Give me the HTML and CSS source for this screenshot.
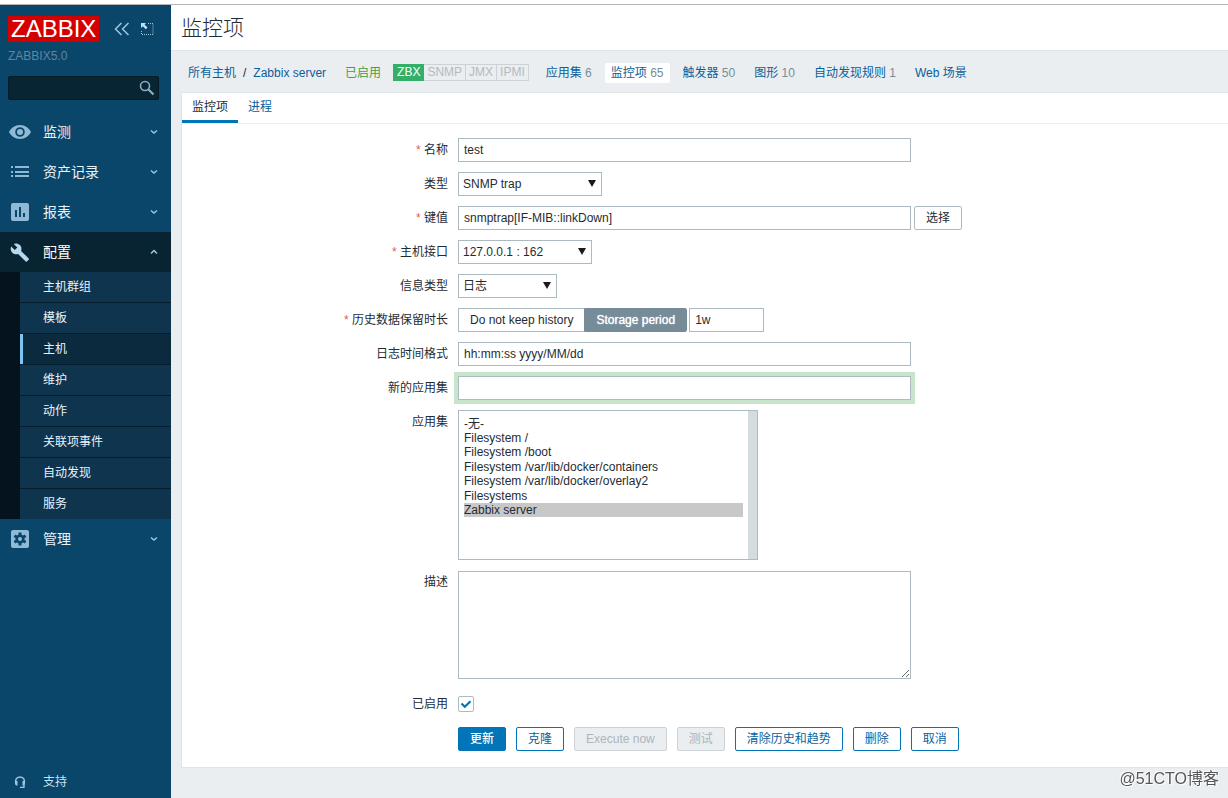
FILE: index.html
```html
<!DOCTYPE html>
<html lang="zh-CN">
<head>
<meta charset="utf-8">
<title>监控项</title>
<link rel="stylesheet" href="styles.css">
</head>
<body>
<div class="app">
  <aside class="sidebar">
    <div class="brand">
      <a class="logo" href="#">ZABBIX</a>
      <button class="icon-button" type="button" aria-label="收起">
        <svg width="16" height="14" viewBox="0 0 16 14"><path d="M7.500 1L1.500 7l6 6M14.500 1l-6 6 6 6" fill="none" stroke="#9dc6e4" stroke-width="1.500"/></svg>
      </button>
      <button class="icon-button" type="button" aria-label="隐藏">
        <svg width="14" height="14" viewBox="0 0 14 14"><path d="M1 1h5L4.500 2.600l3 3-1.700 1.700-3-3L1 6z" fill="#c5e2f5"/><path d="M8 1.500h5v11H1.500V8" fill="none" stroke="#9dc6e4" stroke-dasharray="1 1"/></svg>
      </button>
    </div>
    <div class="server-name">ZABBIX5.0</div>
    <form class="search">
      <input type="text" aria-label="搜索">
      <button type="button" aria-label="搜索">
        <svg width="16" height="16" viewBox="0 0 16 16" fill="none" stroke="#8cadbf"><circle cx="6" cy="6" r="4.500" stroke-width="1.600"/><path d="M9.500 9.500L14.500 14.500" stroke-width="2.200"/></svg>
      </button>
    </form>
    <nav class="menu">
      <a class="menu-item" href="#">
        <svg width="22" height="18" viewBox="0 0 22 18"><path d="M11 2C6 2 2 5 0 9c2 4 6 7 11 7s9-3 11-7c-2-4-6-7-11-7zm0 2.200a4.800 4.800 0 1 1 0 9.600 4.800 4.800 0 0 1 0-9.600z" fill="#8fb9d4"/><circle cx="11" cy="9" r="3" fill="#8fb9d4"/></svg>
        <span>监测</span>
        <svg class="chevron" width="8" height="6" viewBox="0 0 8 6"><path d="M1 1.500l3 2.500 3-2.500"/></svg>
      </a>
      <a class="menu-item" href="#">
        <svg width="22" height="18" viewBox="0 0 22 18" fill="#8fb9d4"><path d="M2 3h2v2H2zM6 3h14v2H6zM2 8h2v2H2zM6 8h14v2H6zM2 12h2v2H2zM6 12h14v2H6z"/></svg>
        <span>资产记录</span>
        <svg class="chevron" width="8" height="6" viewBox="0 0 8 6"><path d="M1 1.500l3 2.500 3-2.500"/></svg>
      </a>
      <a class="menu-item" href="#">
        <svg width="22" height="18" viewBox="0 0 22 18"><rect x="2" width="18" height="18" rx="2" fill="#8fb9d4"/><path d="M6 7h2v7H6zM10 4h2v10h-2zM14 10h2v4h-2z" fill="#0a466a"/></svg>
        <span>报表</span>
        <svg class="chevron" width="8" height="6" viewBox="0 0 8 6"><path d="M1 1.500l3 2.500 3-2.500"/></svg>
      </a>
      <a class="menu-item open" href="#">
        <svg width="22" height="20" viewBox="0 0 22 20"><path d="M19.700 16.500l-7.600-7.600c.8-2 .3-4.200-1.300-5.800C9.200 1.400 6.700 1 4.700 2l3.600 3.600-2.500 2.500L2.200 4.500c-1 2-.6 4.500 1.100 6.200 1.600 1.600 3.900 2 5.800 1.300l7.600 7.600c.3.300.8.300 1.200 0l1.800-1.900c.4-.3.400-.9 0-1.200z" fill="#b5d8ee"/></svg>
        <span>配置</span>
        <svg class="chevron" width="8" height="6" viewBox="0 0 8 6"><path d="M1 4.500l3-3 3 3"/></svg>
      </a>
      <ul class="submenu">
        <li><a href="#">主机群组</a></li>
        <li><a href="#">模板</a></li>
        <li><a class="current" href="#">主机</a></li>
        <li><a href="#">维护</a></li>
        <li><a href="#">动作</a></li>
        <li><a href="#">关联项事件</a></li>
        <li><a href="#">自动发现</a></li>
        <li><a href="#">服务</a></li>
      </ul>
      <a class="menu-item" href="#">
        <svg width="22" height="18" viewBox="0 0 22 18"><rect x="2" width="18" height="18" rx="2" fill="#8fb9d4"/><g fill="none" stroke="#0a466a"><circle cx="11" cy="9" r="3.300" stroke-width="2.600"/><path d="M11 2.500v3M11 12.500v3M5.400 5.700l2.600 1.500M14 10.800l2.600 1.500M5.400 12.300l2.600-1.500M14 7.200l2.600-1.500" stroke-width="3"/></g></svg>
        <span>管理</span>
        <svg class="chevron" width="8" height="6" viewBox="0 0 8 6"><path d="M1 1.500l3 2.500 3-2.500"/></svg>
      </a>
    </nav>
    <a class="support" href="#">
      <svg width="22" height="14" viewBox="0 0 22 14"><path d="M7.500 9.500C5.200 5.500 7.200 2 11 2s5.800 3.500 3.500 7.500" fill="none" stroke="#9dc6e4" stroke-width="1.500"/><path d="M6 6h2.500v4.500H7L6 9zM13.500 6H16v3l-1 1.500h-1.500z" fill="#9dc6e4"/><path d="M15 9.500v2.800h-4" fill="none" stroke="#9dc6e4" stroke-width="1.300"/></svg>
      <span>支持</span>
    </a>
  </aside>

  <main class="content">
    <header class="title-bar"><h1>监控项</h1></header>
    <nav class="host-nav">
      <div class="crumbs"><a href="#">所有主机</a><span>/</span><a href="#">Zabbix server</a></div>
      <span class="enabled">已启用</span>
      <div class="badges"><span class="on">ZBX</span><span>SNMP</span><span>JMX</span><span>IPMI</span></div>
      <div class="links">
        <a href="#">应用集 <em>6</em></a>
        <a class="selected" href="#">监控项 <em>65</em></a>
        <a href="#">触发器 <em>50</em></a>
        <a href="#">图形 <em>10</em></a>
        <a href="#">自动发现规则 <em>1</em></a>
        <a href="#">Web 场景</a>
      </div>
    </nav>

    <section class="card">
      <nav class="tabs"><a class="active" href="#">监控项</a><a href="#">进程</a></nav>
      <form class="item-form">
        <label class="required" for="name">名称</label>
        <div class="field"><input class="wide" id="name" type="text" value="test"></div>

        <label for="type">类型</label>
        <div class="field"><span class="select type"><select id="type"><option>SNMP trap</option></select></span></div>

        <label class="required" for="key">键值</label>
        <div class="field"><input class="wide" id="key" type="text" value="snmptrap[IF-MIB::linkDown]"><button class="pick" type="button">选择</button></div>

        <label class="required" for="iface">主机接口</label>
        <div class="field"><span class="select iface"><select id="iface"><option>127.0.0.1 : 162</option></select></span></div>

        <label for="info">信息类型</label>
        <div class="field"><span class="select info"><select id="info"><option>日志</option></select></span></div>

        <label class="required" for="history">历史数据保留时长</label>
        <div class="field history">
          <div class="segmented">
            <input type="radio" name="mode" id="mode-none"><label for="mode-none">Do not keep history</label>
            <input type="radio" name="mode" id="mode-keep" checked><label for="mode-keep">Storage period</label>
          </div>
          <input class="short" id="history" type="text" value="1w">
        </div>

        <label for="logfmt">日志时间格式</label>
        <div class="field"><input class="wide" id="logfmt" type="text" value="hh:mm:ss yyyy/MM/dd"></div>

        <label for="newapp">新的应用集</label>
        <div class="field"><input class="wide highlighted" id="newapp" type="text"></div>

        <label for="apps">应用集</label>
        <div class="field">
          <select class="listbox" id="apps" multiple>
            <option>-无-</option>
            <option>Filesystem /</option>
            <option>Filesystem /boot</option>
            <option>Filesystem /var/lib/docker/containers</option>
            <option>Filesystem /var/lib/docker/overlay2</option>
            <option>Filesystems</option>
            <option selected>Zabbix server</option>
          </select>
        </div>

        <label for="desc">描述</label>
        <div class="field description"><textarea class="wide" id="desc"></textarea></div>

        <label for="status">已启用</label>
        <div class="field status">
          <input type="checkbox" id="status" checked>
          <svg class="tick" width="16" height="16" viewBox="0 0 16 16"><path d="M3.500 7.500l3.300 3.300 5.700-5.600" fill="none" stroke="#0275b8" stroke-width="2.200"/></svg>
        </div>

        <div class="actions">
          <button class="primary" type="button">更新</button>
          <button type="button">克隆</button>
          <button type="button" disabled>Execute now</button>
          <button type="button" disabled>测试</button>
          <button type="button">清除历史和趋势</button>
          <button type="button">删除</button>
          <button type="button">取消</button>
        </div>
      </form>
    </section>
  </main>
</div>
<div class="watermark">@51CTO博客</div>
</body>
</html>
```
FILE: styles.css
```css
* { box-sizing: border-box; }

body {
  margin: 0;
  min-height: 100vh;
  padding-top: 4px;
  display: flex;
  background: #fff;
  color: #1f2c33;
  font: 12px/18px "Liberation Sans", Arial, "Noto Sans CJK SC", sans-serif;
}

a { color: #0a5f9b; text-decoration: none; }
button, input, select, textarea { font: inherit; color: inherit; margin: 0; }

.app {
  flex: 1;
  display: flex;
  min-width: 0;
  border-top: 1px solid #b5b5b5;
}

/* Sidebar */
.sidebar {
  flex: 0 0 171px;
  min-width: 0;
  display: flex;
  flex-direction: column;
  background: #0a466a;
}
.brand {
  display: flex;
  align-items: center;
  gap: 10px;
  padding: 11px 8px 0;
}
.logo {
  margin-right: 5px;
  padding: 0 3px;
  background: #d40000;
  color: #fff;
  font-size: 24px;
  line-height: 26px;
}
.icon-button {
  display: flex;
  padding: 0;
  border: 0;
  background: none;
}
.server-name {
  padding: 5px 8px 0;
  color: #5d87a1;
}
.search {
  display: flex;
  margin: 11px 12px 12px 8px;
  height: 24px;
  border: 1px solid #051a27;
  border-radius: 2px;
  background: #082534;
}
.search input {
  flex: 1;
  width: 0;
  min-width: 0;
  padding: 0 6px;
  color: #fff;
}
.search button {
  display: flex;
  align-items: center;
  padding: 0 3px;
  border: 0;
  background: none;
}
.menu-item {
  display: flex;
  align-items: center;
  gap: 12px;
  height: 40px;
  padding: 0 13px 0 9px;
  color: #e8f3fa;
  font-size: 14px;
}
.menu-item span { flex: 1; }
.menu-item.open { background: #082432; color: #fff; }
.chevron { fill: none; stroke: #9dc6e4; stroke-width: 1.5; }
.submenu {
  margin: 0;
  padding: 0 0 0 20px;
  list-style: none;
  background: #04131d;
}
.submenu a {
  display: block;
  padding-left: 23px;
  border-bottom: 1px solid #061d2d;
  background: #0f344e;
  color: #e8f3fa;
  line-height: 30px;
}
.submenu li:last-child a { border-bottom: 0; }
.submenu a.current {
  background: #0b2a3d;
  box-shadow: inset 3px 0 #7dc4f5;
}
.support {
  display: flex;
  align-items: center;
  gap: 12px;
  margin-top: auto;
  padding: 0 9px 7px;
  color: #c9e2f2;
}

/* Header */
.content {
  flex: 1;
  min-width: 0;
  background: #ebeef0;
}
.title-bar {
  padding: 7px 10px;
  border-bottom: 1px solid #dfe4e7;
  background: #fff;
}
.title-bar h1 {
  margin: 0;
  font-size: 21px;
  font-weight: 300;
  line-height: 31px;
}
.host-nav {
  display: flex;
  align-items: center;
  height: 41px;
  padding: 2px 17px 0;
  white-space: nowrap;
}
.crumbs { display: flex; gap: 7px; }
.enabled { margin: 0 12px 0 19px; color: #429e47; }
.badges { display: flex; margin-right: 11px; }
.badges span {
  padding: 0 3px;
  border: 1px solid #ccd2d6;
  border-left-width: 0;
  color: #b2bac0;
  line-height: 15px;
}
.badges .on {
  border-color: #34af67;
  border-left-width: 1px;
  background: #34af67;
  color: #fff;
}
.links { display: flex; gap: 7px; }
.links a { padding: 1px 6px; border-radius: 2px; }
.links em { color: #768d99; font-style: normal; }
.links .selected { background: #fff; }

/* Card */
.card {
  margin-left: 10px;
  border: 1px solid #dfe4e7;
  border-right: 0;
  background: #fff;
}
.tabs {
  display: flex;
  border-bottom: 1px solid #ebeef0;
}
.tabs a {
  height: 30px;
  padding: 5px 10px;
}
.tabs .active {
  border-bottom: 3px solid #0275b8;
  color: #1f2c33;
}
.item-form {
  display: grid;
  grid-template-columns: 266px minmax(0, 1fr);
  gap: 10px;
  padding: 14px 0 16px;
}
.item-form > label {
  padding-top: 3px;
  text-align: right;
}
.required::before { content: "* "; color: #e45959; }
.field { display: flex; gap: 3px; min-width: 0; }

input[type="text"], select, textarea {
  height: 24px;
  border: 1px solid #acbbc2;
  border-radius: 0;
  background: #fff;
}
.search input[type="text"] { height: auto; border: 0; background: none; }
.field input[type="text"] { padding: 0 5px; }
.wide { width: 453px; max-width: 100%; min-width: 0; }
.short { width: 75px; }
.highlighted { box-shadow: 0 0 0 4px #c8e4cb; }

.select { position: relative; display: flex; }
.select select {
  width: 100%;
  padding: 0 4px;
  appearance: none;
  line-height: 20px;
}
.select::after {
  content: "";
  position: absolute;
  top: 8px;
  right: 6px;
  border: 4px solid transparent;
  border-top: 7px solid #1a1a1a;
  border-bottom: 0;
  pointer-events: none;
}
.type { width: 144px; }
.iface { width: 134px; }
.info { width: 99px; }

.field button, .actions button {
  height: 24px;
  padding: 0 11px;
  border: 1px solid #0275b8;
  border-radius: 2px;
  background: #fff;
  color: #0a5f9b;
  line-height: 20px;
  white-space: nowrap;
}
.field .pick { border-color: #acbbc2; color: #1f2c33; }

.history { gap: 2px; }
.segmented { display: flex; position: relative; }
.segmented input { position: absolute; opacity: 0; }
.segmented label {
  padding: 0 11px;
  border: 1px solid #acbbc2;
  border-right: 0;
  line-height: 22px;
}
.segmented input:checked + label {
  border: 1px solid #768d99;
  border-radius: 0 2px 2px 0;
  background: #768d99;
  color: #fff;
  text-shadow: 0 0 1px #fff;
}

/* The strip on the right is the empty scroll gutter */
.listbox {
  width: 300px;
  max-width: 100%;
  height: 150px;
  padding: 3px 14px 3px 5px;
  overflow: hidden;
  background: linear-gradient(#d4dce0, #d4dce0) right / 9px 100% no-repeat #fff;
}
.listbox option { padding: 0; }
.listbox option:checked {
  background: #c8c8c8 linear-gradient(#c8c8c8, #c8c8c8);
  color: #1f2c33;
}
.description { padding: 1px 0 3px; }
.description textarea { height: 108px; padding: 4px 5px; resize: both; }

.status { position: relative; align-items: center; height: 24px; }
.status input {
  width: 16px;
  height: 16px;
  appearance: none;
  border: 1px solid #acbbc2;
  border-radius: 2px;
}
.tick { position: absolute; left: 0; top: 4px; pointer-events: none; }

.actions {
  grid-column: 2;
  display: flex;
  flex-wrap: wrap;
  gap: 10px;
  padding-top: 1px;
}
.actions .primary { background: #0275b8; color: #fff; font-weight: 500; }
.actions button:disabled {
  border-color: #ccd2d6;
  background: #ebeef0;
  color: #acb5ba;
}

.watermark {
  position: fixed;
  right: 9px;
  bottom: 7px;
  color: #555;
  font-size: 16px;
  line-height: 24px;
  text-shadow: 1px 1px 1px #fff, -1px -1px 1px #fff;
}
```
